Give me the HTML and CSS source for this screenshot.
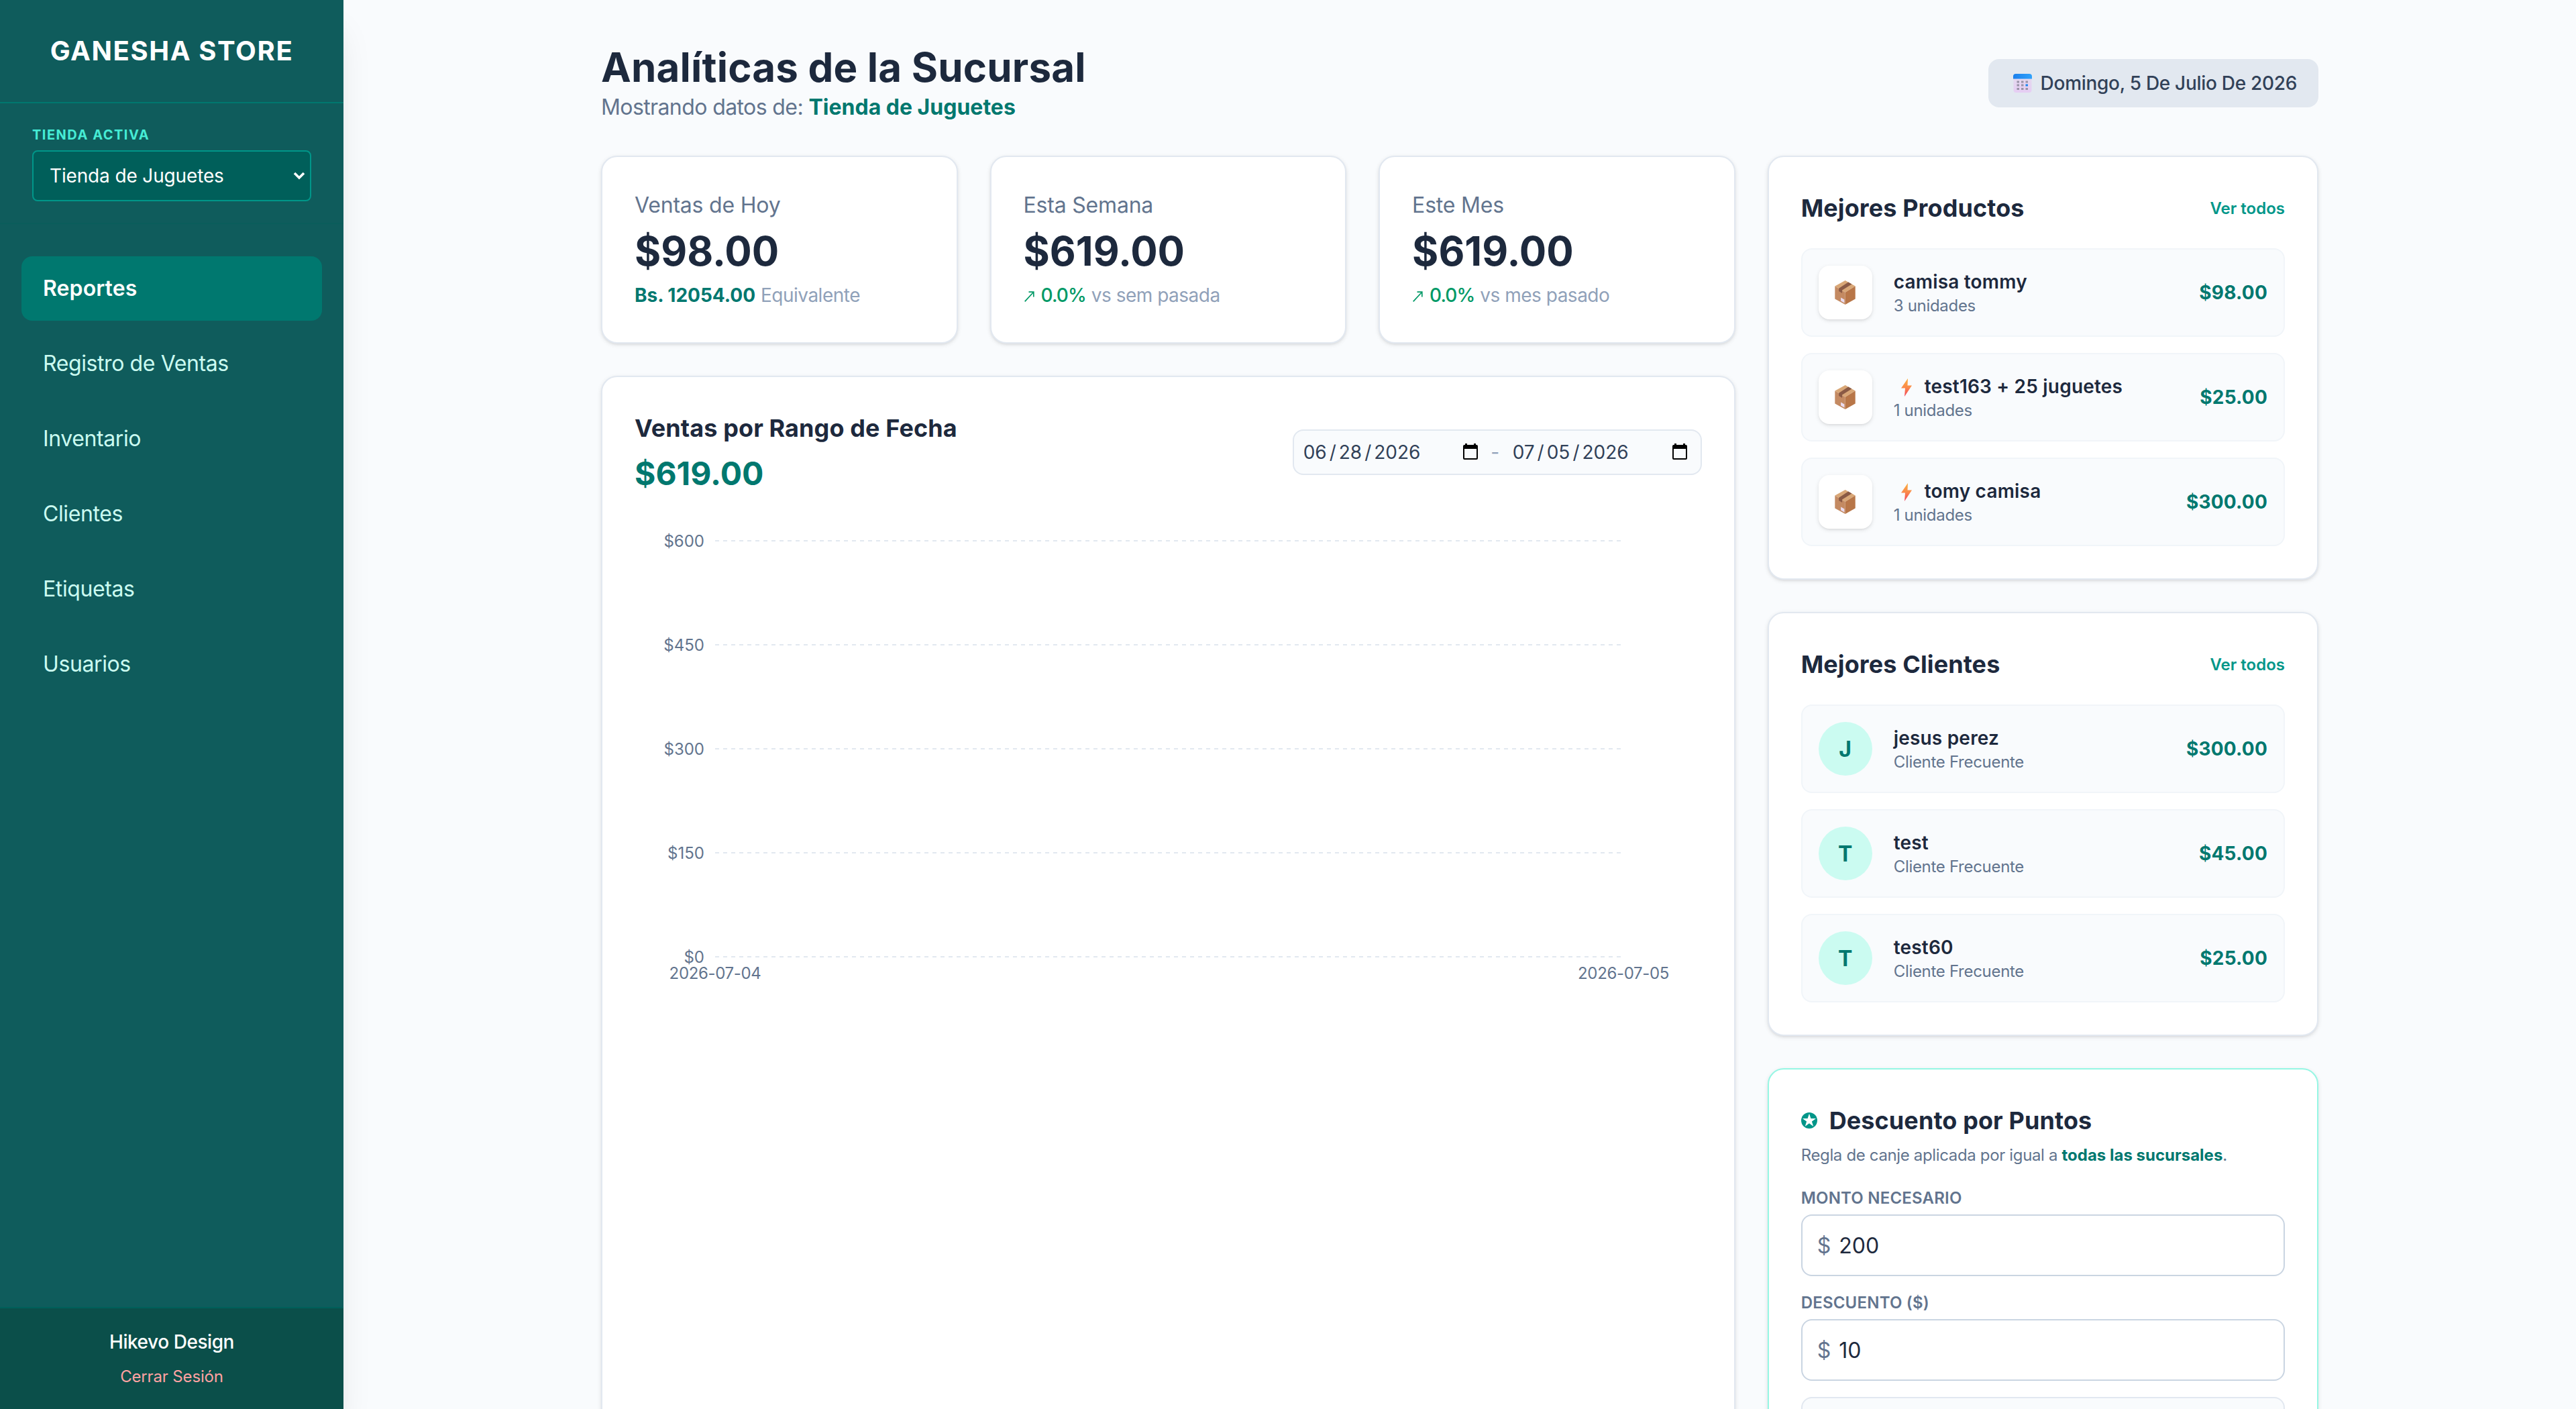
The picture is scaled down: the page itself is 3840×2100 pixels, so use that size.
FILE: index.html
```html
<!DOCTYPE html>
<html lang="es">
<head>
    <meta charset="UTF-8">
    <meta name="viewport" content="width=device-width, initial-scale=1.0">
    <title>Ganesha Store - Reportes</title>
    <link rel="stylesheet" href="styles.css">
</head>
<body>
    <!-- Símbolos reutilizables -->
    <svg class="symbols" width="0" height="0">
        <defs>
            <linearGradient id="bolt-fill" x1="0" y1="0" x2="0" y2="1">
                <stop offset="0" stop-color="#fbb03f"/>
                <stop offset="0.5" stop-color="#fa8a4b"/>
                <stop offset="1" stop-color="#f2415c"/>
            </linearGradient>
            <linearGradient id="cal-fill" x1="0" y1="0" x2="0" y2="1">
                <stop offset="0" stop-color="#e3dcee"/>
                <stop offset="1" stop-color="#e6cdf3"/>
            </linearGradient>
            <linearGradient id="cal-top" x1="0" y1="0" x2="1" y2="0">
                <stop offset="0" stop-color="#1b7fec"/>
                <stop offset="1" stop-color="#2fa2fb"/>
            </linearGradient>
        </defs>
        <symbol id="icon-box" viewBox="0 0 93 110">
            <path d="M47 0 93 26 47 54 0 26Z" fill="#d9a777"/>
            <path d="M0 26 47 54V110L0 84Z" fill="#c48a62"/>
            <path d="M93 26V84L47 110V54Z" fill="#b87648"/>
            <path d="M61 8 77 17 33 44V58L18 49V36Z" fill="#8a5a45"/>
            <path d="M27 78 43 87V102L27 93Z" fill="#eadcf0"/>
        </symbol>
        <symbol id="icon-bolt" viewBox="0 0 16 27">
            <path d="M10 0 0 14.500H6L5 27 16 10.500H9.500Z" fill="url(#bolt-fill)"/>
        </symbol>
        <symbol id="icon-date" viewBox="0 0 22 24">
            <path d="M3 0h3v2h10V0h3v2h1a2 2 0 0 1 2 2v18a2 2 0 0 1-2 2H2a2 2 0 0 1-2-2V4a2 2 0 0 1 2-2h1zM2 8v14h18V8z" fill="#000"/>
        </symbol>
        <symbol id="icon-up" viewBox="0 0 15 16">
            <path d="M0.700 15.300 13.500 1.500M6.500 1.200H13.800V8.500" fill="none" stroke="#009966" stroke-width="1.700"/>
        </symbol>
    </svg>

    <div class="app">
        <aside class="sidebar">
            <div class="brand">GANESHA STORE</div>
            <div class="store">
                <div class="store-label">TIENDA ACTIVA</div>
                <div class="store-select">
                    <span>Tienda de Juguetes</span>
                    <svg width="18" height="12" viewBox="0 0 18 12"><path d="M2 2 9 9 16 2" fill="none" stroke="#fff" stroke-width="3.600"/></svg>
                </div>
            </div>
            <nav class="menu">
                <a class="menu-item active">Reportes</a>
                <a class="menu-item">Registro de Ventas</a>
                <a class="menu-item">Inventario</a>
                <a class="menu-item">Clientes</a>
                <a class="menu-item">Etiquetas</a>
                <a class="menu-item">Usuarios</a>
            </nav>
            <div class="user">
                <div class="user-name">Hikevo Design</div>
                <a class="logout">Cerrar Sesión</a>
            </div>
        </aside>

        <main class="main">
            <div class="container">
                <header class="page-header">
                    <div>
                        <h1>Analíticas de la Sucursal</h1>
                        <p class="subtitle">Mostrando datos de: <strong>Tienda de Juguetes</strong></p>
                    </div>
                    <div class="today">
                        <svg width="28" height="28" viewBox="0 0 28 28">
                            <rect x="0.500" y="1" width="27" height="27" rx="4" fill="url(#cal-fill)"/>
                            <path d="M0 7.500V4a4 4 0 0 1 4-4h20a4 4 0 0 1 4 4v3.500z" fill="url(#cal-top)"/>
                            <g fill="#9a93a8">
                                <rect x="5.500" y="10.500" width="3.500" height="3"/><rect x="12" y="10.500" width="3.500" height="3"/><rect x="18.500" y="10.500" width="3.500" height="3"/>
                                <rect x="5.500" y="15.500" width="3.500" height="3"/><rect x="12" y="15.500" width="3.500" height="3"/>
                                <rect x="5.500" y="21" width="3.500" height="3"/><rect x="12" y="21" width="3.500" height="3"/><rect x="18.500" y="21" width="3.500" height="3"/>
                            </g>
                            <rect x="18.500" y="15.500" width="3.500" height="3" fill="#1b85f0"/>
                        </svg>
                        <span>Domingo, 5 De Julio De 2026</span>
                    </div>
                </header>

                <div class="columns">
                    <div class="col-main">
                        <div class="stats">
                            <div class="card stat">
                                <div class="stat-label">Ventas de Hoy</div>
                                <div class="stat-value">$98.00</div>
                                <div class="stat-note"><b>Bs. 12054.00</b> <span>Equivalente</span></div>
                            </div>
                            <div class="card stat">
                                <div class="stat-label">Esta Semana</div>
                                <div class="stat-value">$619.00</div>
                                <div class="stat-note"><svg class="up" width="15" height="16"><use href="#icon-up"/></svg><em>0.0%</em> <span>vs sem pasada</span></div>
                            </div>
                            <div class="card stat">
                                <div class="stat-label">Este Mes</div>
                                <div class="stat-value">$619.00</div>
                                <div class="stat-note"><svg class="up" width="15" height="16"><use href="#icon-up"/></svg><em>0.0%</em> <span>vs mes pasado</span></div>
                            </div>
                        </div>

                        <div class="card chart-card">
                            <div class="chart-header">
                                <div>
                                    <h2>Ventas por Rango de Fecha</h2>
                                    <div class="chart-total">$619.00</div>
                                </div>
                                <div class="range">
                                    <div class="date"><span>06<i>/</i>28<i>/</i>2026</span><svg width="22" height="24"><use href="#icon-date"/></svg></div>
                                    <span class="dash">-</span>
                                    <div class="date"><span>07<i>/</i>05<i>/</i>2026</span><svg width="22" height="24"><use href="#icon-date"/></svg></div>
                                </div>
                            </div>
                            <svg class="chart" width="1590" height="700" viewBox="0 0 1590 700">
                                <g class="grid-lines">
                                    <line x1="120" y1="20" x2="1474" y2="20"/>
                                    <line x1="120" y1="175" x2="1474" y2="175"/>
                                    <line x1="120" y1="330" x2="1474" y2="330"/>
                                    <line x1="120" y1="485" x2="1474" y2="485"/>
                                    <line x1="120" y1="640" x2="1474" y2="640"/>
                                </g>
                                <g class="axis axis-y">
                                    <text x="104" y="29">$600</text>
                                    <text x="104" y="184">$450</text>
                                    <text x="104" y="339">$300</text>
                                    <text x="104" y="494">$150</text>
                                    <text x="104" y="649">$0</text>
                                </g>
                                <g class="axis axis-x">
                                    <text x="120" y="673">2026-07-04</text>
                                    <text x="1474" y="673">2026-07-05</text>
                                </g>
                            </svg>
                        </div>
                    </div>

                    <div class="col-side">
                        <div class="card">
                            <div class="card-header">
                                <h2>Mejores Productos</h2>
                                <a class="see-all">Ver todos</a>
                            </div>
                            <div class="list">
                                <div class="item">
                                    <div class="thumb"><svg width="31" height="36"><use href="#icon-box"/></svg></div>
                                    <div class="item-info">
                                        <div class="item-name">camisa tommy</div>
                                        <div class="item-sub">3 unidades</div>
                                    </div>
                                    <div class="item-total">$98.00</div>
                                </div>
                                <div class="item">
                                    <div class="thumb"><svg width="31" height="36"><use href="#icon-box"/></svg></div>
                                    <div class="item-info">
                                        <div class="item-name"><svg class="bolt" width="16" height="27"><use href="#icon-bolt"/></svg>test163 + 25 juguetes</div>
                                        <div class="item-sub">1 unidades</div>
                                    </div>
                                    <div class="item-total">$25.00</div>
                                </div>
                                <div class="item">
                                    <div class="thumb"><svg width="31" height="36"><use href="#icon-box"/></svg></div>
                                    <div class="item-info">
                                        <div class="item-name"><svg class="bolt" width="16" height="27"><use href="#icon-bolt"/></svg>tomy camisa</div>
                                        <div class="item-sub">1 unidades</div>
                                    </div>
                                    <div class="item-total">$300.00</div>
                                </div>
                            </div>
                        </div>

                        <div class="card">
                            <div class="card-header">
                                <h2>Mejores Clientes</h2>
                                <a class="see-all">Ver todos</a>
                            </div>
                            <div class="list">
                                <div class="item">
                                    <div class="avatar">J</div>
                                    <div class="item-info">
                                        <div class="item-name">jesus perez</div>
                                        <div class="item-sub">Cliente Frecuente</div>
                                    </div>
                                    <div class="item-total">$300.00</div>
                                </div>
                                <div class="item">
                                    <div class="avatar">T</div>
                                    <div class="item-info">
                                        <div class="item-name">test</div>
                                        <div class="item-sub">Cliente Frecuente</div>
                                    </div>
                                    <div class="item-total">$45.00</div>
                                </div>
                                <div class="item">
                                    <div class="avatar">T</div>
                                    <div class="item-info">
                                        <div class="item-name">test60</div>
                                        <div class="item-sub">Cliente Frecuente</div>
                                    </div>
                                    <div class="item-total">$25.00</div>
                                </div>
                            </div>
                        </div>

                        <div class="card discount">
                            <div class="discount-title">
                                <svg width="24" height="24" viewBox="0 0 24 24">
                                    <circle cx="12" cy="12" r="12" fill="#009689"/>
                                    <path d="M12 1.800 14.400 9H22L15.900 13.500 18.200 20.700 12 16.300 5.800 20.700 8.100 13.500 2 9H9.600Z" fill="#fff"/>
                                </svg>
                                <h2>Descuento por Puntos</h2>
                            </div>
                            <p class="discount-text">Regla de canje aplicada por igual a <strong>todas las sucursales</strong>.</p>
                            <div class="field">
                                <div class="field-label">MONTO NECESARIO</div>
                                <div class="field-input"><span>$</span>200</div>
                            </div>
                            <div class="field">
                                <div class="field-label">DESCUENTO ($)</div>
                                <div class="field-input"><span>$</span>10</div>
                            </div>
                            <div class="rule-box"></div>
                        </div>
                    </div>
                </div>
            </div>
        </main>
    </div>
</body>
</html>
```
FILE: styles.css
```css
* {
    box-sizing: border-box;
}
body {
    font-family: Inter, "Liberation Sans", sans-serif;
    margin: 0;
    background-color: #f9fbfd;
    color: #1d293d;
    height: 100vh;
    overflow: hidden;
}
h1, h2, p {
    margin: 0;
}
.symbols {
    display: block;
}
.app {
    display: flex;
    height: 2100px;
    overflow: hidden;
}

/* Barra lateral */
.sidebar {
    width: 512px;
    flex-shrink: 0;
    display: flex;
    flex-direction: column;
    background-color: #0f5c5c;
    box-shadow: 0 40px 50px -10px rgba(0, 0, 0, 0.1), 0 16px 20px -12px rgba(0, 0, 0, 0.1);
}
.brand {
    padding: 48px 0;
    text-align: center;
    font-size: 40px;
    line-height: 56px;
    font-weight: 700;
    letter-spacing: 1.6px;
    color: #fff;
    border-bottom: 2px solid #00786f;
}
.store {
    padding: 32px 48px;
    border-bottom: 2px solid #0a5d5b;
}
.store-label {
    font-size: 20px;
    line-height: 30px;
    font-weight: 700;
    letter-spacing: 1.5px;
    color: #46ecd5;
    margin-bottom: 8px;
}
.store-select {
    display: flex;
    align-items: center;
    justify-content: space-between;
    height: 76px;
    padding: 0 7px 0 24px;
    border: 2px solid #009689;
    border-radius: 8px;
    background-color: #005f5a;
    color: #fff;
    font-size: 28px;
    letter-spacing: -0.15px;
}
.menu {
    flex: 1;
    display: flex;
    flex-direction: column;
    gap: 16px;
    padding: 48px 32px;
}
.menu-item {
    padding: 24px 32px;
    border-radius: 16px;
    font-size: 32px;
    line-height: 48px;
    letter-spacing: -0.4px;
    color: #cbfbf1;
}
.menu-item.active {
    background-color: #00786f;
    color: #fff;
    font-weight: 600;
    letter-spacing: 0.1px;
}
.user {
    height: 152px;
    padding-top: 30px;
    text-align: center;
    background-color: #0b4f4a;
    border-top: 2px solid #005f5a;
}
.user-name {
    font-size: 28px;
    line-height: 40px;
    font-weight: 500;
    letter-spacing: -0.45px;
    color: #fff;
}
.logout {
    display: block;
    margin-top: 16px;
    font-size: 24px;
    line-height: 32px;
    letter-spacing: -0.15px;
    color: #ffa2a2;
}

/* Contenido */
.main {
    flex: 1;
    padding-top: 64px;
}
.container {
    width: 2560px;
    margin: 0 auto;
}
.page-header {
    display: flex;
    align-items: center;
    justify-content: space-between;
    margin-bottom: 48px;
}
h1 {
    font-size: 60px;
    line-height: 72px;
    font-weight: 700;
    letter-spacing: 0.2px;
}
h2 {
    font-size: 36px;
    line-height: 56px;
    font-weight: 700;
    letter-spacing: 0.1px;
}
.subtitle {
    font-size: 32px;
    line-height: 48px;
    letter-spacing: -0.6px;
    color: #62748e;
}
.subtitle strong, .discount-text strong {
    letter-spacing: 0;
    color: #00786f;
}
.today {
    display: flex;
    align-items: center;
    justify-content: space-between;
    width: 492px;
    padding: 16px 32px 16px 37px;
    border-radius: 16px;
    background-color: #e2e8f0;
    color: #314158;
    font-size: 28px;
    line-height: 40px;
    font-weight: 500;
    letter-spacing: -0.3px;
}
.columns {
    display: grid;
    grid-template-columns: repeat(3, 1fr);
    gap: 48px;
}
.col-main {
    grid-column: span 2;
    display: flex;
    flex-direction: column;
    gap: 48px;
}
.col-side {
    display: flex;
    flex-direction: column;
    gap: 48px;
}
.card {
    padding: 48px;
    border: 2px solid #e2e8f0;
    border-radius: 24px;
    background-color: #fff;
    box-shadow: 0 2px 6px rgba(0, 0, 0, 0.1), 0 2px 4px -2px rgba(0, 0, 0, 0.1);
}
.stats {
    display: grid;
    grid-template-columns: repeat(3, 1fr);
    gap: 48px;
}
.stat {
    height: 280px;
}
.stat-label {
    font-size: 32px;
    line-height: 48px;
    letter-spacing: -0.2px;
    color: #62748e;
}
.stat-value {
    margin-top: 8px;
    font-size: 60px;
    line-height: 72px;
    font-weight: 700;
}
.stat-note {
    margin-top: 10px;
    font-size: 28px;
    line-height: 40px;
    color: #90a1b9;
}
.stat-note span {
    letter-spacing: -0.5px;
}
.stat-note b {
    color: #00786f;
}
.stat-note em {
    font-style: normal;
    font-weight: 500;
    letter-spacing: -0.9px;
    color: #009966;
}
.up {
    margin: 0 10px 0 1px;
}

/* Gráfica de ventas */
.chart-card {
    height: 1700px;
}
.chart-header {
    display: flex;
    align-items: center;
    justify-content: space-between;
    margin-bottom: 48px;
}
.chart-total {
    margin-top: 8px;
    font-size: 48px;
    line-height: 64px;
    font-weight: 700;
    color: #00786f;
}
.range {
    display: flex;
    align-items: center;
    justify-content: space-between;
    width: 610px;
    height: 68px;
    padding: 0 20px 0 14px;
    border: 2px solid #e2e8f0;
    border-radius: 16px;
    background-color: #f9fbfd;
    font-size: 28px;
    color: #314158;
}
.date {
    display: flex;
    align-items: center;
    justify-content: space-between;
    width: 260px;
}
.date i {
    font-style: normal;
    margin: 0 4px;
}
.date svg {
    margin-bottom: 2px;
}
.dash {
    color: #90a1b9;
}
.chart {
    display: block;
}
.grid-lines line {
    stroke: #e2e8f0;
    stroke-width: 2;
    stroke-dasharray: 6 6;
}
.axis text {
    font-size: 24px;
    fill: #62748e;
}
.axis-y text {
    text-anchor: end;
}
.axis-x text {
    text-anchor: middle;
    letter-spacing: -0.35px;
}

/* Listas */
.card-header {
    display: flex;
    align-items: center;
    justify-content: space-between;
    margin-bottom: 32px;
}
.see-all {
    font-size: 24px;
    font-weight: 600;
    color: #009689;
}
.list {
    display: flex;
    flex-direction: column;
    gap: 24px;
}
.item {
    display: flex;
    align-items: center;
    padding: 24px;
    border: 2px solid #f1f5f9;
    border-radius: 16px;
    background-color: #f9fbfd;
}
.thumb, .avatar {
    display: flex;
    align-items: center;
    justify-content: center;
    width: 80px;
    height: 80px;
    margin-right: 32px;
}
.thumb {
    border-radius: 16px;
    background-color: #fff;
    box-shadow: 0 2px 6px rgba(0, 0, 0, 0.1), 0 2px 4px -2px rgba(0, 0, 0, 0.1);
}
.avatar {
    border-radius: 50%;
    background-color: #cbfbf1;
    color: #00786f;
    font-size: 32px;
    font-weight: 700;
}
.item-info {
    flex: 1;
}
.item-name {
    font-size: 28px;
    line-height: 40px;
    font-weight: 600;
    letter-spacing: 0.2px;
}
.bolt {
    margin: 0 19px 0 11px;
    vertical-align: -5px;
}
.item-sub {
    font-size: 24px;
    line-height: 32px;
    letter-spacing: -0.3px;
    color: #62748e;
}
.item-total {
    font-size: 28px;
    font-weight: 700;
    letter-spacing: 0.2px;
    color: #00786f;
}

/* Descuento por puntos */
.discount {
    border-color: #96f7e4;
    height: 700px;
}
.discount-title {
    display: flex;
    align-items: center;
    gap: 18px;
}
.discount-text {
    margin: 8px 0 32px;
    font-size: 24px;
    line-height: 32px;
    letter-spacing: -0.35px;
    color: #62748e;
}
.field {
    margin-bottom: 24px;
}
.field-label {
    margin-bottom: 8px;
    font-size: 24px;
    line-height: 32px;
    font-weight: 600;
    letter-spacing: 0.2px;
    color: #62748e;
}
.field-input {
    display: flex;
    align-items: center;
    gap: 12px;
    height: 92px;
    padding: 0 22px;
    border: 2px solid #cad5e2;
    border-radius: 16px;
    background-color: #fff;
    font-size: 32px;
}
.field-input span {
    color: #62748e;
}
.rule-box {
    height: 140px;
    border: 2px solid #e2e8f0;
    border-radius: 16px;
    background-color: #f9fbfd;
}
```
